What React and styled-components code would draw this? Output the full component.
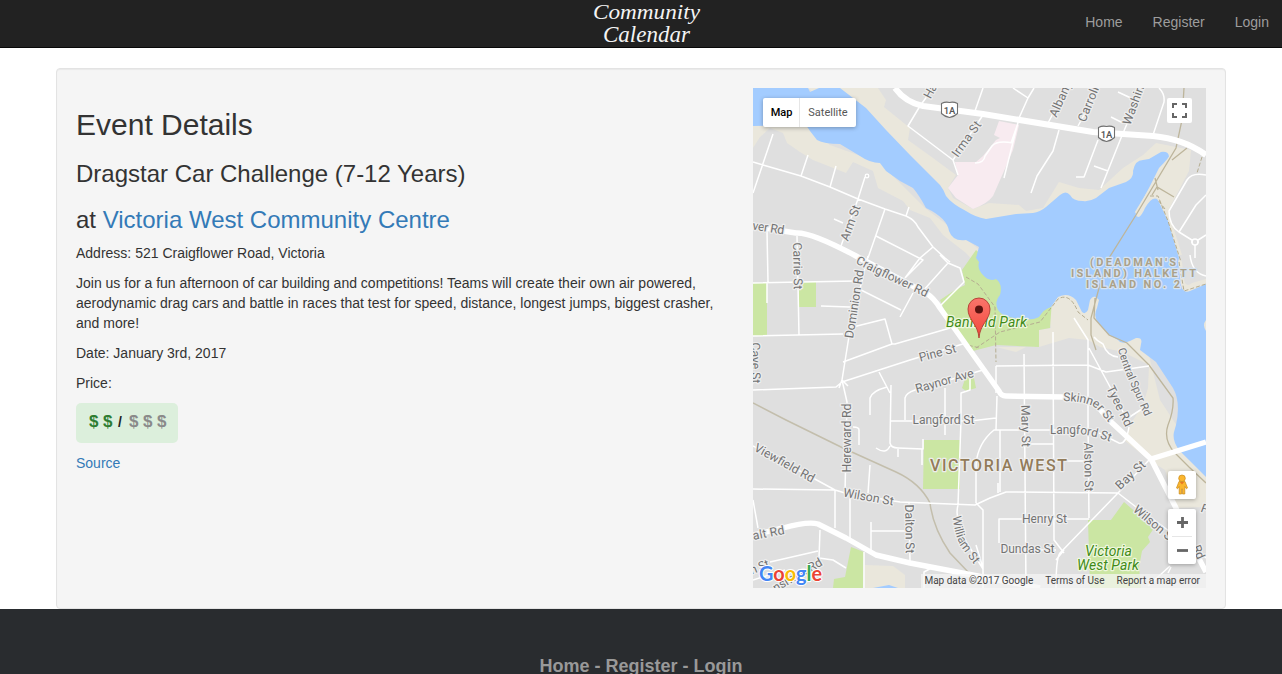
import React from 'react';
import styled, { createGlobalStyle } from 'styled-components';

const GlobalStyle = createGlobalStyle`
  * { box-sizing: border-box; }
  html, body { margin: 0; padding: 0; overflow: hidden; background: #fff; }
  body { font: 14px/20px "Liberation Sans", Arial, sans-serif; color: #333; }
`;

const Page = styled.div`height: 674px; overflow: hidden;`;

const Navbar = styled.nav`
  display: grid;
  grid-template-columns: 1fr 120px 1fr;
  height: 48px;
  background: #222;
  border-bottom: 1px solid #080808;
`;
const Brand = styled.svg`
  grid-column: 2;
  width: 120px;
  height: 47px;
  margin-left: 6px;
`;
const NavLinks = styled.div`
  display: flex;
  justify-content: flex-end;
  gap: 30px;
  padding: 12px 13px 0 0;
`;
const NavLink = styled.a`color: #9d9d9d;`;

const Well = styled.main`
  display: grid;
  grid-template-columns: 647px 453px;
  column-gap: 30px;
  width: 1170px;
  height: 541px;
  margin: 20px auto 0;
  padding: 19px;
  background: #f5f5f5;
  border: 1px solid #e3e3e3;
  border-radius: 4px;
  box-shadow: inset 0 1px 1px rgba(0, 0, 0, 0.05);
`;
const Details = styled.section`padding-top: 20px;`;
const Title = styled.h2`
  margin: 0 0 20px;
  font-size: 30px;
  font-weight: normal;
  line-height: 33px;
`;
const Subtitle = styled.h3`
  margin: 0 0 ${(p) => (p.$last ? '9px' : '20px')};
  font-size: 24px;
  font-weight: normal;
  line-height: 26.4px;
`;
const Link = styled.a`color: #337ab7;`;
const Text = styled.p`margin: 0 0 10px;`;
const PriceTag = styled.div`
  display: flex;
  align-items: center;
  width: 102px;
  height: 40px;
  margin-bottom: 10px;
  padding: 0 0 2px 13px;
  border-radius: 5px;
  background: #dcefdc;
  font-weight: bold;
`;
const Dollar = styled.span`
  width: 14px;
  font-size: 17px;
  color: ${(p) => (p.$on ? '#2e7d32' : '#8a8a8a')};
`;
const Slash = styled.span`width: 12px; padding-left: 1px; font-size: 14px; color: #222;`;

const Footer = styled.footer`
  height: 200px;
  padding-top: 45px;
  background: #292c2f;
  color: #999;
  text-align: center;
  font-size: 18px;
  font-weight: bold;
  line-height: 24px;
`;

const MapFrame = styled.div`
  position: relative;
  width: 453px;
  height: 500px;
  overflow: hidden;
  font-family: Roboto, sans-serif;
`;
const MapArt = styled.svg`display: block; width: 453px; height: 500px;`;
const Control = styled.div`
  position: absolute;
  display: flex;
  background: #fff;
  border-radius: 2px;
  box-shadow: 0 1px 4px rgba(0, 0, 0, 0.3);
`;
const TypeControl = styled(Control)`left: 10px; top: 10px; height: 29px;`;
const TypeButton = styled.span`
  width: ${(p) => (p.$active ? 37 : 56)}px;
  padding-left: ${(p) => (p.$active ? 1 : 0)}px;
  line-height: 29px;
  text-align: center;
  font-size: 11px;
  font-weight: ${(p) => (p.$active ? 500 : 400)};
  color: ${(p) => (p.$active ? '#000' : '#565656')};
  border-right: ${(p) => (p.$active ? '1px solid #e6e6e6' : '0')};
`;
const FullscreenControl = styled(Control)`
  right: 14px; top: 10px; width: 25px; height: 25px;
  align-items: center; justify-content: center;
  box-shadow: none;
`;
const PegmanControl = styled(Control)`
  right: 10px; top: 383px; width: 28px; height: 28px;
  align-items: center; justify-content: center;
`;
const ZoomControl = styled(Control)`
  right: 10px; top: 421px; width: 28px; height: 55px;
  flex-direction: column; align-items: center;
`;
const ZoomButton = styled.span`
  display: flex; align-items: center; justify-content: center;
  width: 20px; height: 27px;
  & + & { border-top: 1px solid #e6e6e6; height: 28px; }
`;
const Credits = styled.div`
  position: absolute;
  right: 0; bottom: 0;
  display: flex;
  gap: 12px;
  height: 14px;
  padding: 0 6px 0 3px;
  background: rgba(245, 245, 245, 0.72);
  font-size: 10px;
  line-height: 14px;
  color: #444;
  white-space: nowrap;
`;

const WATER = [
  'M753 88H808L810 92 819 88H840L866 108 886 130 910 155 940 185Q944 190 946 196 952 204 966 211 975 217 986 219L1016 214 1033 213Q1040 212 1046 207L1060 195Q1066 190 1070 195 1073 201 1083 201 1089 202 1096 198L1109 188 1126 182Q1134 178 1133 171 1135 160 1143 160L1149 159 1161 152Q1169 151 1169 157 1164 163 1159 168L1149 188 1136 212Q1135 217 1139 217 1142 215 1145 208 1153 195 1158 200L1168 221 1179 258 1178 262 1181 285Q1183 294 1190 291L1206 284V320Q1202 325 1206 331V477L1189 460 1179 450Q1172 440 1174 432L1176 425Q1181 402 1173 388L1156 362 1140 350 1141 344Q1143 337 1136 338L1130 341Q1121 345 1118 340L1109 335 1098 322Q1093 316 1097 308L1099 300Q1094 293 1090 300L1088 310Q1085 315 1082 312L1076 300Q1068 292 1058 297L1051 307Q1044 309 1039 317 1030 322 1009 317 1001 315 998 310 994 302 1000 295 1003 284 996 279 989 282 983 275 977 269 979 262L976 258 979 247 966 240Q953 242 949 231 947 218 926 208 919 195 913 188L900 181 886 171 880 163Q870 163 860 156L840 144Q824 144 817 140L810 131 806 125 753 126Z',
  'M873 588 889 585 898 588Z',
];
const SAND = [
  'M753 126H806L830 145 880 163 925 208 980 250 984 280 974 262 966 253 943 235 930 218 910 210 903 201 878 188 873 171 853 162 846 173 813 160 800 152 787 143 783 133 770 128 760 137 753 148Z',
  'M808 88H878L886 100 884 107 910 128 908 140 933 158 956 175 948 188 953 198 973 209 989 203 1019 205 1026 211 1043 208 1059 182 1079 188 1099 190 1123 168 1143 155 1156 143 1191 150 1189 171 1168 211 1182 255H1175L1130 225 1080 210 980 228Z',
  'M1178 255 1182 262 1184 280Q1186 288 1192 283L1206 279V292H1178Z',
  'M1045 300 1051 328 1039 330V347L1069 338 1088 340 1100 347 1123 352 1149 365 1148 388 1143 405 1133 420 1124 440 1149 460 1165 470 1168 480 1176 508 1206 507V470L1160 400 1150 360 1145 330 1085 290Z',
  'M996 347H1026L1016 352Z M865 565 893 566 905 575V588H865Z M1201 318H1206V335H1201Z',
];
const PARKS = [
  'M753 283H767V336H753Z M799 282H816V307H799Z M924 440H960V489H923Z',
  'M976 250 962 270 965 285 955 290 940 300 946 314 973 351 996 345 1039 347V330L1050 328 1052 300 1020 290Z',
  'M966 376 974 378 976 388 966 391 962 388Z',
  'M1124 502 1154 528 1148 537 1150 542 1142 551 1139 567 1141 588H1090L1088 520 1111 520Z',
  'M851 547 864 552 863 588H833L834 579 845 577Z',
];
const MINOR = `M753 162 763 165 801 176 830 187 858 199 885 209 906 216Q915 220 918 227L933 247 945 258 950 262
M773 134 753 193M808 155 801 176M836 166 830 187M865 177 858 199 841 246M909 207 906 216M885 209 868 258M834 219 843 223M876 236 923 260 905 278M933 247 920 258 905 278
M767 231 768 282M797 236 799 335M933 88 920 106 908 126 953 160 958 175M953 160 983 115M975 111 983 88M975 163Q984 163 985 156L992 146Q997 140 1013 143
M1013 88 1028 98 1034 88M1028 98 1019 118 1004 178M1018 123 1011 143M1063 95 1048 123M1059 130 1053 151 1037 176 1031 193M1095 95 1078 126M1098 140 1084 177H1076M1137 100 1121 138 1101 188M1094 166 1108 171M1111 117 1123 123M1118 92 1133 99M1159 88Q1165 94 1164 102L1153 135
M1206 175Q1192 172 1187 180L1169 211Q1169 225 1179 232L1195 242 1206 235M1179 232 1196 205 1206 195M1195 242V258M1191 242H1199M1190 255Q1192 273 1206 276
M753 283 856 281M767 283V303M753 336 843 334M821 306 850 307M868 256 850 330 842 380 847 402 845 492M861 290 901 310M913 293 900 317M940 255 948 263 960 268 964 282 940 306M948 263 922 292M853 327 885 319 892 344 895 344 950 328M843 362 892 344M753 390 836 387 842 382 910 360 966 343M839 388 842 380 848 386M879 372 890 393M891 385 890 443Q891 448 898 448L923 449V439M922 449V465M876 448Q886 455 890 446M898 449V457
M870 415V398Q872 391 887 387M905 420V398Q906 393 915 390L983 370M945 388V435M961 422V393L970 390 970 372M891 421H970L996 418M961 420 958 505Q954 520 967 543L983 569M859 445V430Q859 427 853 427M870 465 868 493
M753 489 835 490M753 446 813 478 835 490 845 493 900 502 975 505 990 498 1006 492 1118 493M835 490V528M850 493V540M753 500 758 528M871 522V553M871 531H905M909 503 910 562M820 530 819 558 833 560 846 568M770 562 818 551M864 552V588M753 580 785 570
M1024 354 1026 588M1053 332 1054 540 1064 553M1088 340V420L1089 518M996 366 1088 365 1106 372 1149 366M996 366V393M1089 348 1109 385 1130 425M1074 318 1088 340V365M1094 337Q1097 341 1103 344 1107 356 1118 357M997 396 996 430M976 503V464Q978 443 994 430L1049 430H1088M1026 444H1054M1054 461H1088M976 503 983 510V588M998 483V493
M1149 460 1118 493 1060 553Q1056 558 1056 588M1118 493 1136 507 1206 558M999 543V519H1089M1000 550H1056M1064 550 1056 560M1099 433 1119 443Q1126 445 1129 427M1000 430V492M1148 586 1170 566M1171 567 1168 573M1125 420 1148 405M976 545 983 568M924 588V572L935 566`;
const MAJOR = [
  'M895 88Q905 102 923 106L983 114 1093 132 1153 136Q1184 139 1206 155',
  'M753 226 783 231 796 233Q811 232 856 256L926 293Q934 298 940 308L999 391Q1001 396 1006 396L1063 397Q1091 396 1099 408L1109 420 1151 459 1176 508 1196 553 1206 572M1151 459 1206 442',
  'M753 535 783 528Q808 521 818 524L846 538 876 555 910 563 983 577 1040 588',
];
const TRAILS = `M1184 88 1182 120 1176 148 1136 215 1109 258 1099 288 1091 318V335L1096 350M1172 160 1187 148M1152 195 1157 187 1174 197M1155 178 1158 190M1095 298 1094 318 1109 335 1127 343 1149 365 1173 398Q1174 410 1168 425 1163 440 1175 453L1189 467 1206 483`;
const DASHED = `M1150 196H1158L1168 221 1181 262M1165 209 1158 200M1202 157 1197 173M966 277 978 284 995 307 996 362M976 348 1000 332 1040 322 1058 299Q1070 292 1078 312L1088 320M963 344 980 348M1179 262 1184 291 1206 284`;

const labels = [
  { t: 'Ha', x: 930, y: 91, r: -62, w: 15 }, { t: 'Irma St', x: 966, y: 139, r: -54, w: 41 },
  { t: 'Albany', x: 1060, y: 99, r: -66, w: 38 }, { t: 'Carroll', x: 1088, y: 104, r: -68, w: 37 },
  { t: 'Washin', x: 1133, y: 105, r: -70, w: 41 }, { t: 'Arm St', x: 850, y: 223, r: -70, w: 37 },
  { t: 'ver Rd', x: 768, y: 228, r: 9, w: 32 }, { t: 'Carrie St', x: 797, y: 266, r: 89, w: 47 },
  { t: 'Dominion Rd', x: 854, y: 304, r: -81, w: 69 }, { t: 'Cave St', x: 755, y: 363, r: 89, w: 41 },
  { t: 'Pine St', x: 937, y: 353, r: -15, w: 38 }, { t: 'Raynor Ave', x: 944, y: 381, r: -16, w: 60 },
  { t: 'Langford St', x: 943, y: 420, r: 0, w: 62 }, { t: 'Hereward Rd', x: 846, y: 438, r: -90, w: 69 },
  { t: 'Viewfield Rd', x: 784, y: 463, r: 29, w: 67 }, { t: 'Wilson St', x: 868, y: 497, r: 10, w: 51 },
  { t: 'Dalton St', x: 909, y: 529, r: 89, w: 49 }, { t: 'alt Rd', x: 768, y: 533, r: -11, w: 32 },
  { t: 'n St', x: 759, y: 567, r: -22, w: 20 }, { t: 'nsman Rd', x: 797, y: 575, r: -30, w: 55 },
  { t: 'Mary St', x: 1025, y: 426, r: 89, w: 42 }, { t: 'Tyee Rd', x: 1119, y: 406, r: 64, w: 44 },
  { t: 'Alston St', x: 1088, y: 467, r: 89, w: 49 }, { t: 'Bay St', x: 1130, y: 475, r: -43, w: 36 },
  { t: 'Henry St', x: 1044, y: 519, r: 0, w: 45 }, { t: 'Dundas St', x: 1027, y: 549, r: 0, w: 54 },
  { t: 'Wilson St', x: 1154, y: 524, r: 40, w: 51 }, { t: 'Rd', x: 1198, y: 552, r: 66, w: 14 },
  { t: 'F', x: 1204, y: 509, r: 20, w: 6 },
];
const curved = [
  { id: 'craig', t: 'Craigflower Rd', d: 'M855 263Q880 276 900 285T940 305', w: 79 },
  { id: 'skin', t: 'Skinner St', d: 'M1063 401Q1090 401 1098 410T1112 427', w: 53 },
  { id: 'lang', t: 'Langford St', d: 'M1050 434H1075Q1093 434 1118 445', w: 61 },
  { id: 'spur', t: 'Central Spur Rd', d: 'M1118 349Q1122 365 1130 383T1150 428', w: 73, s: 11 },
  { id: 'will', t: 'William St', d: 'M953 516Q954 535 962 548L984 578', w: 54 },
];

const Casing = styled.g`
  paint-order: stroke;
  stroke: ${(p) => p.$halo || '#ededed'};
  stroke-width: ${(p) => p.$width || 2.5}px;
  stroke-linejoin: round;
`;
const googleLetters = [['G', '#4285f4'], ['o', '#ea4335'], ['o', '#fbbc05'], ['g', '#4285f4'], ['l', '#34a853'], ['e', '#ea4335']];

function Shield({ x, y }) {
  return (
    <g>
      <path d={`M${x - 8} ${y - 6}Q${x - 4} ${y - 8} ${x} ${y - 7}Q${x + 4} ${y - 8} ${x + 8} ${y - 6}V${y + 4}Q${x + 5} ${y + 7} ${x} ${y + 8}Q${x - 5} ${y + 7} ${x - 8} ${y + 4}Z`} fill="#fff" stroke="#707070" strokeWidth="1.1" strokeLinejoin="round" />
      <text x={x} y={y + 4} textAnchor="middle" fontSize="9.5" fontWeight="500" fill="#555">1A</text>
    </g>
  );
}

function MapCanvas() {
  return (
    <MapArt viewBox="753 88 453 500">
      <rect x="753" y="88" width="453" height="500" fill="#dfdfdf" />
      {SAND.map((d) => <path key={d} d={d} fill="#eae7dc" />)}
      {PARKS.map((d) => <path key={d} d={d} fill="#cbe6a3" />)}
      {WATER.map((d) => <path key={d} d={d} fill="#a3ccff" />)}
      <path d="M999 121 1019 125 1013 150 1004 171 993 196Q987 204 973 209L956 198 948 188 958 175 955 162 976 162 983 156 996 140 1000 138 994 135Z" fill="#f8ebf0" />
      <path d="M1136 213 1176 148" stroke="#eae7dc" strokeWidth="3" />
      <path d="M753 403 786 420 843 448 896 472Q920 483 930 503 933 528 950 553L970 574" fill="none" stroke="#c3beac" strokeWidth="1.5" />
      <path d={TRAILS} fill="none" stroke="#bdb59b" strokeWidth="1.3" />
      <path d={DASHED} fill="none" stroke="#b5ad91" strokeWidth="1" strokeDasharray="4 2" />
      <path d={MINOR} fill="none" stroke="#fff" strokeWidth="1.5" strokeLinejoin="round" />
      <circle cx="1195" cy="242" r="3" fill="#dfdfdf" stroke="#fff" strokeWidth="1.6" />
      <circle cx="867" cy="176" r="1.8" fill="#dfdfdf" stroke="#fff" strokeWidth="1.3" />
      {MAJOR.map((d, i) => <path key={d} d={d} fill="none" stroke="#fff" strokeWidth={i === 0 ? 6 : 5.4} strokeLinejoin="round" />)}
      <Shield x={949.5} y={109.5} />
      <Shield x={1106.5} y={133.5} />
      <Casing fill="#737373" fontSize="12.3">
        {labels.map((l) => (
          <text key={l.t + l.x} transform={`translate(${l.x + 0.5} ${l.y}) rotate(${l.r})`} y="4" textAnchor="middle" textLength={l.w}>{l.t}</text>
        ))}
        {curved.map((c) => (
          <React.Fragment key={c.id}>
            <path id={c.id} d={c.d} fill="none" stroke="none" />
            <text fontSize={c.s || 12} textLength={c.w}><textPath href={`#${c.id}`}>{c.t}</textPath></text>
          </React.Fragment>
        ))}
      </Casing>
      <Casing fill="#927b59" fontSize="16" fontWeight="500"><text x="930" y="471" textLength="137">VICTORIA WEST</text></Casing>
      <Casing $halo="#d6e3f2" fill="#aaa189" fontSize="11" fontWeight="700">
        <text x="1090" y="266" textLength="86">(DEADMAN'S</text>
        <text x="1071" y="277" textLength="125">ISLAND) HALKETT</text>
        <text x="1086" y="288" textLength="94">ISLAND NO. 2</text>
      </Casing>
      <Casing $halo="#eef7de" fill="#3f8a17" fontSize="14" fontStyle="italic">
        <text x="946" y="327" textLength="81">Banfield Park</text>
        <text x="1085" y="556" textLength="47">Victoria</text>
        <text x="1077" y="570" textLength="62">West Park</text>
      </Casing>
      <path d="M979 338C978 324 968 320 968 309A11 11 0 0 1 990 309C990 320 980 324 979 338Z" fill="url(#pin)" stroke="#b13a31" strokeWidth="0.9" />
      <circle cx="979" cy="309.5" r="4" fill="#5b1310" />
      <defs>
        <linearGradient id="pin" x1="0" y1="0" x2="0" y2="1">
          <stop offset="0" stopColor="#f9756b" /><stop offset="1" stopColor="#f4463c" />
        </linearGradient>
      </defs>
      <Casing $halo="#fff" $width={2} fontFamily="Lato, sans-serif" fontSize="21" fontWeight="700">
        <text x="759" y="580.5" textLength="63" lengthAdjust="spacingAndGlyphs">{googleLetters.map(([c, f], i) => <tspan key={i} fill={f}>{c}</tspan>)}</text>
      </Casing>
    </MapArt>
  );
}

export default function App() {
  return (
    <Page>
      <GlobalStyle />
      <Navbar>
        <Brand viewBox="587 0 120 47" fill="#f4f4f4" fontFamily="'Liberation Serif', serif" fontStyle="italic">
          <text x="593" y="19" fontSize="22" textLength="107" lengthAdjust="spacingAndGlyphs">Community</text>
          <text x="603" y="42" fontSize="23" textLength="87" lengthAdjust="spacingAndGlyphs">Calendar</text>
        </Brand>
        <NavLinks><NavLink>Home</NavLink><NavLink>Register</NavLink><NavLink>Login</NavLink></NavLinks>
      </Navbar>
      <Well>
        <Details>
          <Title>Event Details</Title>
          <Subtitle>Dragstar Car Challenge (7-12 Years)</Subtitle>
          <Subtitle $last>at <Link>Victoria West Community Centre</Link></Subtitle>
          <Text>Address: 521 Craigflower Road, Victoria</Text>
          <Text>Join us for a fun afternoon of car building and competitions! Teams will create their own air powered, aerodynamic drag cars and battle in races that test for speed, distance, longest jumps, biggest crasher, and more!</Text>
          <Text>Date: January 3rd, 2017</Text>
          <Text>Price:</Text>
          <PriceTag>
            <Dollar $on>$</Dollar><Dollar $on>$</Dollar><Slash>/</Slash>
            <Dollar>$</Dollar><Dollar>$</Dollar><Dollar>$</Dollar>
          </PriceTag>
          <Link>Source</Link>
        </Details>
        <MapFrame>
          <MapCanvas />
          <TypeControl><TypeButton $active>Map</TypeButton><TypeButton>Satellite</TypeButton></TypeControl>
          <FullscreenControl>
            <svg width="15" height="15" fill="none" stroke="#666" strokeWidth="2"><path d="M1 5V1H5M10 1H14V5M14 10V14H10M5 14H1V10" /></svg>
          </FullscreenControl>
          <PegmanControl>
            <svg width="14" height="22" viewBox="0 0 14 22" stroke="#c98a1b" strokeWidth="0.7" fill="#fbb62d">
              <path d="M4 7.5H10L12.5 14 11.5 14.8 9.8 12.5V20H7.5V15H6.5V20H4.2V12.5L2.5 14.8 1.5 14Z" />
              <circle cx="7" cy="4.3" r="3.3" />
              <path d="M4.8 8 7 10.5 9.2 8Z" fill="#e77724" stroke="none" />
            </svg>
          </PegmanControl>
          <ZoomControl>
            <ZoomButton><svg width="11" height="11" stroke="#666" strokeWidth="2.8"><path d="M5.5 0V11M0 5.5H11" /></svg></ZoomButton>
            <ZoomButton><svg width="11" height="11" stroke="#666" strokeWidth="2.8"><path d="M0 5.5H11" /></svg></ZoomButton>
          </ZoomControl>
          <Credits><span>Map data ©2017 Google</span><span>Terms of Use</span><span>Report a map error</span></Credits>
        </MapFrame>
      </Well>
      <Footer>Home - Register - Login</Footer>
    </Page>
  );
}
